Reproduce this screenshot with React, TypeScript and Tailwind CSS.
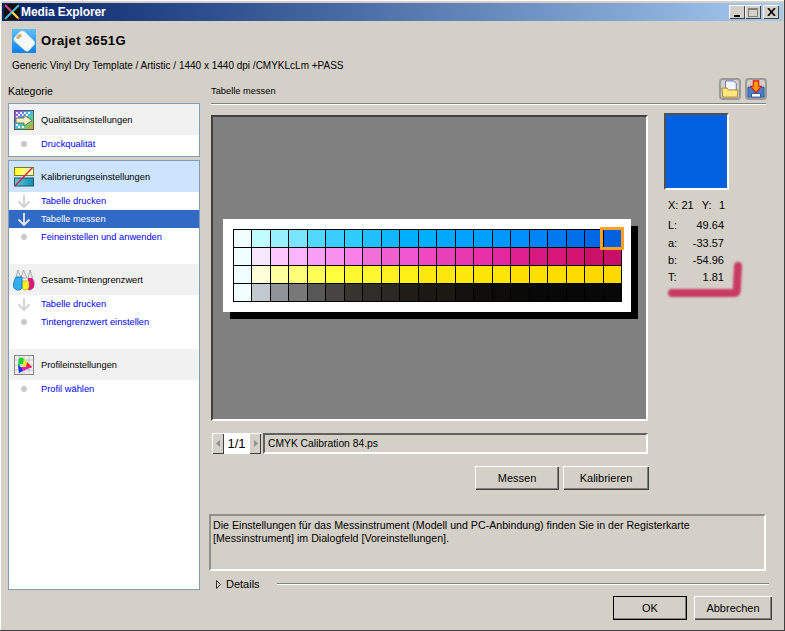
import * as React from 'react';

const rows = [
  ['f0ffff', 'c0ffff', '98f0ff', '78e4ff', '50d8ff', '38ccff', '30ccff', '20c0ff', '10b8ff', '00b0ff', '00b0ff', '00a8ff', '00a4ff', '00a0ff', '0098ff', '0090ff', '0084f8', '0078f0', '0070e8', '0068e4', '0060e0'],
  ['f0ffff', 'f8e8ff', 'fcc8ff', 'fcb4ff', 'f8a0f8', 'f890f0', 'f880e8', 'f070d8', 'f060d0', 'f058d0', 'f048c0', 'e840b8', 'e838b0', 'e830a8', 'e428a0', 'e02090', 'd81a80', 'd81878', 'd41470', 'cc1068', 'c81068'],
  ['f0ffff', 'ffffd8', 'ffffa0', 'ffff78', 'ffff58', 'ffff40', 'fff830', 'fff830', 'fff020', 'fff018', 'ffe810', 'ffe810', 'ffe810', 'ffe408', 'ffe408', 'ffe000', 'ffe000', 'ffdc00', 'ffdc00', 'ffd800', 'ffd800'],
  ['f0ffff', 'c0c8d0', '909498', '787878', '585858', '484444', '383430', '302c28', '2c2824', '201c18', '1c1814', '1c1814', '141210', '100e0c', '0e0c0a', '0a0a08', '080808', '080808', '080808', '080808', '080808'],
];

function PrinterRollIcon() {
  return (
    <svg width="24" height="24" viewBox="0 0 24 24">
      <defs>
        <linearGradient id="sky" x1="0" x2="0" y1="0" y2="1">
          <stop offset="0" stopColor="#60c0f8" />
          <stop offset="1" stopColor="#0880f0" />
        </linearGradient>
      </defs>
      <rect width="24" height="24" fill="url(#sky)" />
      <path d="M2 9 8 2.5c2-1 4-.5 5.5 1L22 12c1 1.5 1 3 0 4l-5 5.5c-1 1-3 1-4 0L3.500 13C2 12 1.500 10.500 2 9z" fill="#f8f8f2" stroke="#d8d4c8" strokeWidth="0.5" />
      <ellipse cx="7" cy="7.500" rx="3" ry="1.800" fill="#c8b078" transform="rotate(-42 7 7.500)" />
    </svg>
  );
}

function QualityIcon() {
  return (
    <svg width="20" height="20" viewBox="0 0 20 20">
      <defs>
        <linearGradient id="q" x1="0" y1="0" x2="1" y2="1">
          <stop offset="0" stopColor="#b030f0" />
          <stop offset="0.45" stopColor="#40b8f0" />
          <stop offset="0.7" stopColor="#60d080" />
          <stop offset="1" stopColor="#ff9000" />
        </linearGradient>
      </defs>
      <rect x="0.5" y="0.5" width="19" height="19" fill="url(#q)" stroke="#5a5a5a" />
      <path d="M2 2h2v2H2zM6 2h2v2H6zM10 2h2v2h-2zM14 2h2v2h-2zM4 4h2v2H4zM8 4h2v2H8zM12 4h2v2h-2zM2 6h2v2H2zM2 14h2v2H2zM4 16h2v2H4zM8 16h2v2H8z" fill="#fff" opacity="0.85" />
      <path d="M2 8h8V5l8 5.500-8 5.500v-3H2z" fill="#f6f2c0" stroke="#6a6a50" strokeWidth="0.9" />
    </svg>
  );
}

function CalibrationIcon() {
  return (
    <svg width="20" height="20" viewBox="0 0 20 20">
      <defs>
        <linearGradient id="y" x1="0" x2="1" y1="0" y2="0">
          <stop offset="0" stopColor="#ffff20" />
          <stop offset="1" stopColor="#ffffd0" />
        </linearGradient>
        <linearGradient id="t" x1="0" x2="1" y1="0" y2="0">
          <stop offset="0" stopColor="#60c8d8" />
          <stop offset="1" stopColor="#1090b0" />
        </linearGradient>
      </defs>
      <rect x="0.5" y="0.5" width="19" height="8" fill="url(#y)" stroke="#7a7a20" />
      <rect x="0.5" y="11" width="19" height="8" fill="url(#t)" stroke="#205060" />
      <path d="M1 19 19 0" stroke="#e01850" strokeWidth="1.4" />
    </svg>
  );
}

function InkIcon() {
  return (
    <svg width="22" height="22" viewBox="0 0 22 22">
      <path d="M15 9 17 1l3 9c1 2 2 4 1 7-1 3-3 4-5 4z" fill="#e8e8e8" stroke="#909090" strokeWidth="0.7" />
      <path d="M8 9 10.500 1 14 9z" fill="#e8e8e8" stroke="#909090" strokeWidth="0.7" />
      <path d="M3 9 5 1l3 8z" fill="#e8e8e8" stroke="#909090" strokeWidth="0.7" />
      <path d="M15 9h4c2 3 2.500 5 2 8s-3 4-6 4z" fill="#d81878" />
      <path d="M9 12h7v6c0 2-2 3-4 3s-3-1-3-3z" fill="#fff020" stroke="#a09020" strokeWidth="0.6" />
      <path d="M3 8h6v11c-1 2-3 2-5 2-3-1-4-3-3.500-6C1 12 2 10 3 8z" fill="#30b0f0" stroke="#1070b0" strokeWidth="0.8" />
    </svg>
  );
}

function ProfileIcon() {
  return (
    <svg width="20" height="20" viewBox="0 0 20 20">
      <rect x="0.5" y="0.5" width="19" height="19" fill="#f0f0f0" stroke="#888" />
      <path d="M5 .5v19M10 .5v19M15 .5v19M.5 5h19M.5 10h19M.5 15h19" stroke="#b0b0b0" strokeWidth="0.6" />
      <path d="M4 10 5 3c2-1 4-.5 5 1l1 5-5 3z" fill="#20d040" />
      <path d="M10 4l4 4 1 3-7 1z" fill="#e8e820" />
      <path d="M13 7l5 5-1 1-5-1z" fill="#f02030" />
      <path d="M6 12l12 0-9 4z" fill="#e020c0" />
      <path d="M4 10l3 2 2 4-4 2z" fill="#2030f0" />
      <path d="M6 9l3 0 0 3-3 0z" fill="#f0f0f0" opacity="0.7" />
    </svg>
  );
}

function ArrowIcon({ light }: { light?: boolean }) {
  return (
    <svg width="14" height="15" viewBox="0 0 14 15" fill="none" stroke={light ? '#e8e8e8' : '#d0d0d0'} strokeWidth="1.800">
      <path d="M7 1v12M1.500 7.500 7 13l5.500-5.500" />
    </svg>
  );
}

function Dot() {
  return <span className="block h-[6px] w-[6px] rounded-full bg-[#c8c8c8]" />;
}

function Item({ label, arrow, active }: { label: string; arrow?: boolean; active?: boolean }) {
  return (
    <div className={`flex h-[18px] items-center ${active ? 'bg-[#316ac5] text-white' : 'text-[#0000ee]'}`}>
      <span className="flex w-[32px] justify-center pr-[3px]">{arrow ? <ArrowIcon light={active} /> : <Dot />}</span>
      <span className="pt-[2px]">{label}</span>
    </div>
  );
}

function Section({ icon, label, active }: { icon: React.ReactNode; label: string; active?: boolean }) {
  return (
    <div className={`flex h-[31px] items-center ${active ? 'bg-[#cce4fc]' : 'bg-[#f1f1f1]'}`}>
      <span className="flex w-[32px] justify-center pr-[2px]">{icon}</span>
      <span className="pt-[2px] text-black">{label}</span>
    </div>
  );
}

function TitleButton({ children }: { children: React.ReactNode }) {
  return (
    <div className="flex h-[14px] w-[16px] items-center justify-center bg-[#d4d0c8] shadow-[inset_1px_1px_0_#fff,inset_-1px_-1px_0_#404040]">
      {children}
    </div>
  );
}

function Btn({ label, className }: { label: string; className?: string }) {
  return (
    <button className={`flex h-[24px] items-center justify-center bg-[#d4d0c8] text-black shadow-[inset_1px_1px_0_#fff,inset_-1px_-1px_0_#404040,inset_-2px_-2px_0_#808080] ${className ?? ''}`}>
      {label}
    </button>
  );
}

function StepButton({ dir }: { dir: 'left' | 'right' }) {
  return (
    <div className="flex h-[21px] w-[12px] items-center justify-center bg-[#d4d0c8] shadow-[inset_1px_1px_0_#fff,inset_-1px_-1px_0_#404040]">
      <svg width="5" height="7" viewBox="0 0 5 7" fill="#909090">
        <path d={dir === 'left' ? 'M4 0v7L0 3.500z' : 'M1 0v7l4-3.500z'} />
      </svg>
    </div>
  );
}

function Chart() {
  return (
    <div className="ml-[10px] mt-[102px] h-[93px] w-[408px] bg-white pl-[10px] pt-[10px] shadow-[7px_7px_0_#000]">
      <div className="relative grid h-[73px] w-[389px] grid-cols-[repeat(21,1fr)] grid-rows-4 gap-px bg-black p-px">
        {rows.flatMap((row, r) =>
          row.map((c, i) => <div key={`${r}-${i}`} style={{ backgroundColor: `#${c}` }} />)
        )}
        <div className="absolute right-[-2px] top-[-2px] h-[23px] w-[24px] border-[3px] border-[#ffa020]" />
      </div>
    </div>
  );
}

function Readout({ label, value }: { label: string; value: string }) {
  return (
    <div className="flex h-[17.333px] items-center justify-between">
      <span>{label}</span>
      <span>{value}</span>
    </div>
  );
}

export default function App() {
  return (
    <div className="relative h-[631px] w-[785px] overflow-hidden bg-[#d4d0c8] px-[2px] pt-[3px] text-[11px] text-black shadow-[inset_-1px_-1px_0_#404040,inset_1px_1px_0_#fff] [font-family:'Liberation_Sans',sans-serif]">
      {/* Title bar */}
      <div className="flex h-[18px] items-center justify-between bg-gradient-to-r from-[#0a246a] to-[#a6caf0] pl-[2px] pr-[4px]">
        <div className="flex items-center gap-[1px]">
          <svg width="16" height="16" viewBox="0 0 16 16">
            <rect width="16" height="16" fill="#111" />
            <path d="M1 1l14 14" stroke="#e040a0" strokeWidth="2" />
            <path d="M15 1 1 15" stroke="#40c0e0" strokeWidth="2" />
            <path d="M8 8l6 6" stroke="#f0e040" strokeWidth="2" />
          </svg>
          <span className="text-[12px] font-bold tracking-[-0.1px] text-white">Media Explorer</span>
        </div>
        <div className="flex items-center">
          <TitleButton>
            <span className="mt-[7px] block h-[2px] w-[6px] bg-black" />
          </TitleButton>
          <TitleButton>
            <span className="block h-[9px] w-[10px] border border-t-2 border-[#808080]" />
          </TitleButton>
          <span className="w-[2px]" />
          <TitleButton>
            <svg width="9" height="8" viewBox="0 0 9 8" stroke="#000" strokeWidth="1.600">
              <path d="M1 0l7 8M8 0 1 8" />
            </svg>
          </TitleButton>
        </div>
      </div>

      {/* Header */}
      <div className="ml-[10px] mt-[8px] flex h-[24px] items-center gap-[5px]">
        <PrinterRollIcon />
        <span className="text-[13px] font-bold tracking-[0.4px]">Orajet 3651G</span>
      </div>
      <div className="ml-[10px] mt-[6px] h-[14px] text-[10px] leading-[14px]">
        Generic Vinyl Dry Template / Artistic / 1440 x 1440 dpi /CMYKLcLm +PASS
      </div>

      <div className="mt-[11px] flex pl-[6px]">
        {/* Category list */}
        <div className="w-[192px]">
          <div className="flex h-[19px] items-center pb-[3px] text-[10.5px]">Kategorie</div>
          <div className="h-[54px] border border-[#7f9db9] bg-white text-[9.300px]">
            <Section icon={<QualityIcon />} label="Qualitätseinstellungen" />
            <Item label="Druckqualität" />
          </div>
          <div className="mt-[3px] h-[430px] border border-[#7f9db9] bg-white text-[9.300px]">
            <Section active icon={<CalibrationIcon />} label="Kalibrierungseinstellungen" />
            <Item arrow label="Tabelle drucken" />
            <Item arrow active label="Tabelle messen" />
            <Item label="Feineinstellen und anwenden" />
            <div className="h-[18px]" />
            <Section icon={<InkIcon />} label="Gesamt-Tintengrenzwert" />
            <Item arrow label="Tabelle drucken" />
            <Item label="Tintengrenzwert einstellen" />
            <div className="h-[18px]" />
            <Section icon={<ProfileIcon />} label="Profileinstellungen" />
            <Item label="Profil wählen" />
          </div>
        </div>

        {/* Measure panel */}
        <div className="ml-[11px] w-[558px]">
          <div className="flex h-[19px] items-center justify-between pr-[2px]">
            <span className="-mt-[3px] text-[9.300px]">Tabelle messen</span>
            <div className="-mt-[10px] flex gap-[4px]">
              <div className="flex h-[22px] w-[22px] items-center justify-center rounded-[4px] border-2 border-[#9a9a9a]">
                <svg width="20" height="20" viewBox="0 0 20 20">
                  <path d="M5 1h9l3 3v9H5z" fill="#f2f4ff" stroke="#6070b0" />
                  <path d="M1 9h6l1 2h11l-1 8H2z" fill="#ffe680" stroke="#a88020" />
                </svg>
              </div>
              <div className="flex h-[22px] w-[22px] items-center justify-center rounded-[4px] border-2 border-[#9a9a9a]">
                <svg width="20" height="20" viewBox="0 0 20 20">
                  <path d="M1 8h18v11H1z" fill="#4a80c8" stroke="#2a5090" />
                  <path d="M5 15h10v4H5z" fill="#fff" stroke="#2a5090" />
                  <path d="M7 1h6v6h3l-6 7-6-7h3z" fill="#ff9a00" stroke="#e01010" strokeWidth="1.200" />
                </svg>
              </div>
            </div>
          </div>
          <div className="h-[2px] w-[555px] border-t border-[#808080] bg-white" />

          <div className="flex">
            <div className="mt-[10px] h-[306px] w-[437px] border-2 border-[#404040] border-b-white border-r-white bg-[#808080]">
              <div className="flow-root">
                <Chart />
              </div>
            </div>
            <div className="ml-[16px] mt-[8px] w-[65px]">
              <div className="h-[77px] border-2 border-[#505050] border-b-white border-r-white bg-[#0060e0]" />
              <div className="mt-[8px] flex h-[15px] items-center px-[4px]">
                <span>X: 21</span>
                <span className="ml-[8px]">Y:</span>
                <span className="ml-auto">1</span>
              </div>
              <div className="mt-[4px] pl-[4px] pr-[5px]">
                <Readout label="L:" value="49.64" />
                <Readout label="a:" value="-33.57" />
                <Readout label="b:" value="-54.96" />
                <Readout label="T:" value="1.81" />
              </div>
            </div>
          </div>

          {/* File pager */}
          <div className="ml-[1px] mt-[12px] flex h-[21px] items-center">
            <StepButton dir="left" />
            <div className="flex h-[21px] w-[25px] items-center justify-center bg-white text-[13px]">1/1</div>
            <StepButton dir="right" />
            <div className="ml-[2px] flex h-[21px] w-[385px] items-center border-2 border-[#606060] border-b-white border-r-white pl-[3px] text-[10.300px]">
              CMYK Calibration 84.ps
            </div>
          </div>

          <div className="mt-[12px] flex w-[438px] justify-end gap-[4px]">
            <Btn label="Messen" className="w-[84px]" />
            <Btn label="Kalibrieren" className="w-[86px]" />
          </div>

          <div className="-ml-[2px] mt-[24px] h-[57px] w-[557px] border-2 border-[#909090] border-b-white border-r-white px-[2px] pt-[3px] text-[10.650px] leading-[13px]">
            Die Einstellungen für das Messinstrument (Modell und PC-Anbindung) finden Sie in der Registerkarte
            <br />
            [Messinstrument] im Dialogfeld [Voreinstellungen].
          </div>

          <div className="mt-[6px] flex h-[14px] items-center">
            <svg className="ml-[5px]" width="5" height="9" viewBox="0 0 5 9" fill="none" stroke="#333">
              <path d="M.5.5v8l4-4z" />
            </svg>
            <span className="ml-[5px]">Details</span>
            <span className="ml-[17px] h-[2px] w-[493px] border-t border-[#808080] bg-white" />
          </div>
        </div>
      </div>

      {/* Footer buttons */}
      <div className="mt-[5px] flex justify-end gap-[7px] pr-[11px]">
        <Btn label="OK" className="w-[74px] outline outline-1 -outline-offset-1 outline-black" />
        <Btn label="Abbrechen" className="w-[78px]" />
      </div>

      {/* Red marker annotation drawn over the readout */}
      <svg className="pointer-events-none absolute left-[660px] top-[255px] blur-[1px]" width="90" height="50" viewBox="0 0 90 50" fill="none">
        <path d="M12 38H74C77 38 77 36 77 30L78 11" stroke="#c93a60" strokeWidth="8" strokeLinecap="round" strokeLinejoin="round" />
      </svg>
    </div>
  );
}
